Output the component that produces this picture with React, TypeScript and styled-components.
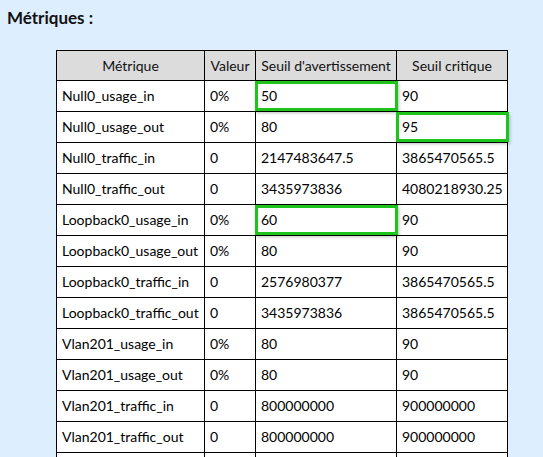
import React from "react";
import styled, { createGlobalStyle } from "styled-components";

const Global = createGlobalStyle`
  html, body {
    margin: 0;
    padding: 0;
    background: #ddeeff;
  }
  body {
    font-family: Lato, "Noto Sans", sans-serif;
    color: #000;
  }
`;

const Page = styled.div`
  padding: 9px 8px 0 7px;
`;

const Heading = styled.h3`
  margin: 0 0 23px 0;
  font-size: 17px;
  line-height: 18px;
  font-weight: 700;
  color: #111;
`;

const Table = styled.table`
  margin-left: 49px;
  border-collapse: collapse;
  table-layout: fixed;
  width: 451px;
  background: #fff;
  font-size: 14px;
`;

const HeadCell = styled.th`
  background: #dcdcdc;
  border: 1px solid #000;
  font-weight: 400;
  color: #111;
  height: 29px;
  padding: 0 3px;
  text-align: center;
  white-space: nowrap;
`;

const Cell = styled.td`
  position: relative;
  border: 1px solid #000;
  height: 30px;
  padding: 0 5px;
  text-align: left;
  white-space: nowrap;
  line-height: 16px;
`;

const Highlight = styled.span`
  position: absolute;
  left: -1px;
  right: -2px;
  top: 0;
  bottom: 0;
  border: 3px solid #1cc41c;
  box-shadow: 1px 2px 3px rgba(0, 0, 0, 0.25);
  pointer-events: none;
`;

type Row = { m: string; v: string; w: string; c: string; hw?: boolean; hc?: boolean };

const rows: Row[] = [
  { m: "Null0_usage_in", v: "0%", w: "50", c: "90", hw: true },
  { m: "Null0_usage_out", v: "0%", w: "80", c: "95", hc: true },
  { m: "Null0_traffic_in", v: "0", w: "2147483647.5", c: "3865470565.5" },
  { m: "Null0_traffic_out", v: "0", w: "3435973836", c: "4080218930.25" },
  { m: "Loopback0_usage_in", v: "0%", w: "60", c: "90", hw: true },
  { m: "Loopback0_usage_out", v: "0%", w: "80", c: "90" },
  { m: "Loopback0_traffic_in", v: "0", w: "2576980377", c: "3865470565.5" },
  { m: "Loopback0_traffic_out", v: "0", w: "3435973836", c: "3865470565.5" },
  { m: "Vlan201_usage_in", v: "0%", w: "80", c: "90" },
  { m: "Vlan201_usage_out", v: "0%", w: "80", c: "90" },
  { m: "Vlan201_traffic_in", v: "0", w: "800000000", c: "900000000" },
  { m: "Vlan201_traffic_out", v: "0", w: "800000000", c: "900000000" },
  { m: "Vlan202_usage_in", v: "0%", w: "80", c: "90" },
];

export default function App() {
  return (
    <Page>
      <Global />
      <Heading>Métriques :</Heading>
      <Table>
        <colgroup>
          <col style={{ width: 148 }} />
          <col style={{ width: 51 }} />
          <col style={{ width: 141 }} />
          <col style={{ width: 111 }} />
        </colgroup>
        <thead>
          <tr>
            <HeadCell>Métrique</HeadCell>
            <HeadCell>Valeur</HeadCell>
            <HeadCell>Seuil d'avertissement</HeadCell>
            <HeadCell>Seuil critique</HeadCell>
          </tr>
        </thead>
        <tbody>
          {rows.map((r) => (
            <tr key={r.m}>
              <Cell>{r.m}</Cell>
              <Cell>{r.v}</Cell>
              <Cell>
                {r.w}
                {r.hw && <Highlight />}
              </Cell>
              <Cell>
                {r.c}
                {r.hc && <Highlight />}
              </Cell>
            </tr>
          ))}
        </tbody>
      </Table>
    </Page>
  );
}
